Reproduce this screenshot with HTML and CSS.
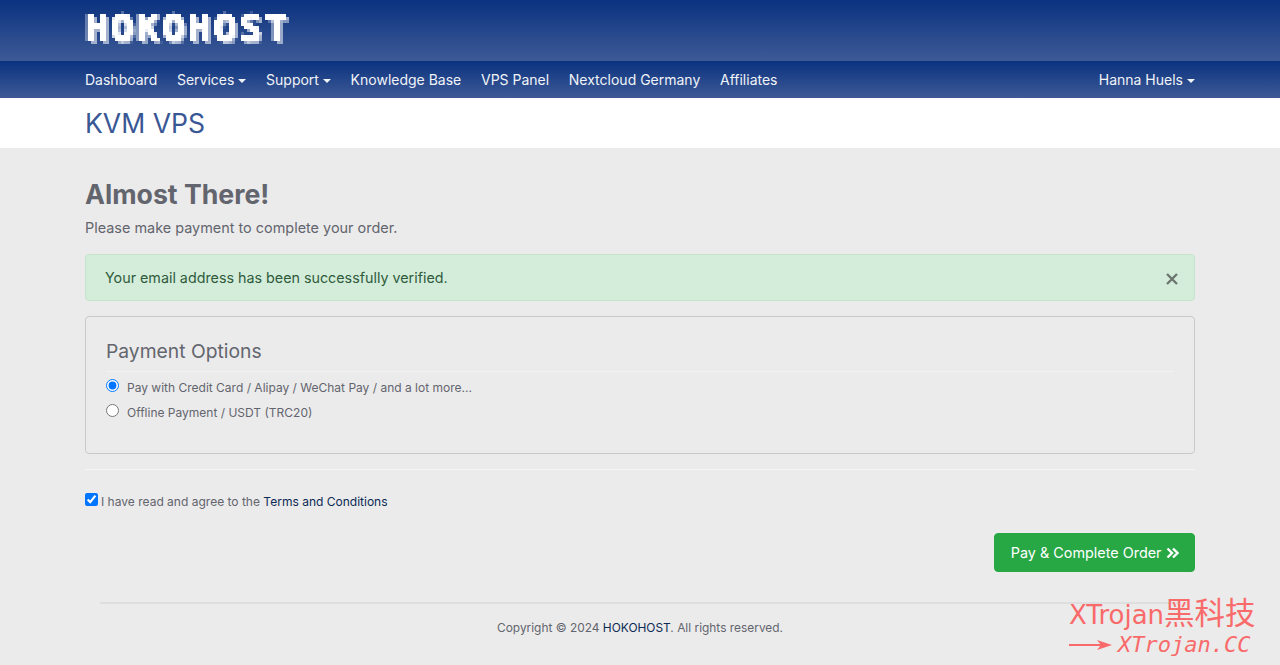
FILE: index.html
```html
<!DOCTYPE html>
<html lang="en">
<head>
<meta charset="utf-8">
<title>KVM VPS</title>
<link rel="stylesheet" href="styles.css">
</head>
<body>
<svg class="defs" width="0" height="0" aria-hidden="true">
  <filter id="pixelate" x="0" y="0" width="100%" height="100%">
    <feFlood x="1" y="1" width="1" height="1"/>
    <feComposite width="3" height="3"/>
    <feTile result="grid"/>
    <feComposite in="SourceGraphic" in2="grid" operator="in"/>
    <feMorphology operator="dilate" radius="1"/>
  </filter>
</svg>
<header class="brandbar">
  <div class="container"><a class="logo">HOKOHOST</a></div>
</header>
<nav class="navbar">
  <div class="container nav-inner">
    <ul class="nav-list">
      <li>Dashboard</li>
      <li class="caret">Services</li>
      <li class="caret">Support</li>
      <li>Knowledge Base</li>
      <li>VPS Panel</li>
      <li>Nextcloud Germany</li>
      <li>Affiliates</li>
    </ul>
    <ul class="nav-list">
      <li class="caret">Hanna Huels</li>
    </ul>
  </div>
</nav>
<section class="page-title">
  <div class="container"><h1>KVM VPS</h1></div>
</section>
<main class="container content">
  <h2 class="heading">Almost There!</h2>
  <p class="lead">Please make payment to complete your order.</p>
  <div class="alert">
    <span>Your email address has been successfully verified.</span>
    <svg class="close" width="12" height="12" viewBox="0 0 12 12"><path d="M1 1l10 10M11 1L1 11" stroke="#6d7570" stroke-width="2.4" fill="none"/></svg>
  </div>
  <div class="card">
    <h3 class="card-title">Payment Options</h3>
    <label class="option"><input type="radio" name="pay" checked><span>Pay with Credit Card / Alipay / WeChat Pay / and a lot more...</span></label>
    <label class="option"><input type="radio" name="pay"><span>Offline Payment / USDT (TRC20)</span></label>
  </div>
  <hr class="rule">
  <label class="terms"><input type="checkbox" checked><span>I have read and agree to the <a>Terms and Conditions</a></span></label>
  <div class="actions">
    <button class="btn">Pay &amp; Complete Order
      <svg width="13" height="12" viewBox="0 0 13 12"><path d="M1.5 1.5L6 6l-4.500 4.500M7 1.500L11.500 6 7 10.500" stroke="#fff" stroke-width="2.400" fill="none"/></svg>
    </button>
  </div>
  <footer class="footer">Copyright © 2024 <a>HOKOHOST</a>. All rights reserved.</footer>
</main>
<div class="watermark">
  <div class="wm-top">XTrojan<span class="wm-cjk">黑科技</span></div>
  <div class="wm-bottom">
    <svg width="43" height="12" viewBox="0 0 43 12"><path d="M0 6h32" stroke="#f96a6a" stroke-width="2"/><path d="M28 1l15 5-15 5 4-5z" fill="#f96a6a"/></svg>
    <span>XTrojan.CC</span>
  </div>
</div>
</body>
</html>
```

FILE: styles.css
```css
* { box-sizing: border-box; }
html, body { margin: 0; padding: 0; }
body {
  height: 665px;
  overflow: hidden;
  position: relative;
  background: #ebebeb;
  color: #63656e;
  font-family: Inter, "Noto Sans CJK SC", sans-serif;
  font-size: 14.43px;
}
.defs { position: absolute; }
.container { width: 1140px; margin: 0 auto; padding: 0 15px; }
.brandbar { height: 61px; background: linear-gradient(#0a327f, #3e5a96); }
.logo {
  display: inline-block;
  margin: 11px 0 0;
  padding: 0 6px 3px 0;
  font-family: "DejaVu Sans Mono", monospace;
  font-weight: 700;
  font-size: 38px;
  line-height: 34px;
  letter-spacing: 2.8px;
  color: #fff;
  -webkit-text-stroke: 1.6px #fff;
  text-shadow: 3px 3px 0 #a3b1cf;
  filter: url(#pixelate);
}
.navbar { height: 37px; background: linear-gradient(#0a327f, #3e5a96); }
.nav-inner { display: flex; justify-content: space-between; align-items: center; height: 37px; }
.nav-list { display: flex; gap: 19.7px; list-style: none; margin: 0; padding: 0; color: #f0f3f8; font-size: 14px; }
.caret::after {
  content: "";
  display: inline-block;
  margin-left: 4px;
  vertical-align: 2px;
  border-top: 4px solid;
  border-left: 4px solid transparent;
  border-right: 4px solid transparent;
}
.page-title { height: 50px; background: #fff; }
.page-title h1 { margin: 0; font-size: 26.6px; font-weight: 400; line-height: 50px; color: #3a5795; }
.content { padding-top: 29px; }
.heading { margin: 0; font-size: 26.7px; font-weight: 700; line-height: 34px; color: #63656e; }
.lead { margin: 7px 0 0; line-height: 20px; }
.alert {
  display: flex;
  justify-content: space-between;
  align-items: center;
  height: 47px;
  margin-top: 16px;
  padding: 0 16px 0 19px;
  background: #d4edda;
  border: 1px solid #c3e6cb;
  border-radius: 4px;
  color: #2f5b3c;
  font-size: 14.3px;
}
.close { margin-top: 2px; }
.card {
  height: 138px;
  margin-top: 15px;
  padding: 21px 20px 20px;
  border: 1px solid #c9c9c9;
  border-radius: 4px;
}
.card-title {
  margin: 0 0 7px;
  padding-bottom: 7px;
  font-size: 19.3px;
  font-weight: 400;
  line-height: 26px;
  border-bottom: 1px solid #f2f2f2;
}
.option { display: flex; align-items: flex-start; gap: 8px; height: 25px; font-size: 12px; line-height: 20px; }
.option input { margin: 0; width: 13px; height: 13px; accent-color: #0075ff; }
.option span { margin-top: -1px; }
.rule { margin: 15px 0 0; border: 0; border-top: 1px solid #f5f5f5; }
.terms { display: flex; align-items: flex-start; gap: 3px; margin-top: 23px; font-size: 12.03px; line-height: 18px; }
.terms input { margin: 0; width: 13px; height: 13px; accent-color: #0075ff; }
a { color: #0d2a55; }
.actions { display: flex; justify-content: flex-end; margin-top: 22px; }
.btn {
  display: flex;
  align-items: center;
  gap: 4px;
  height: 39px;
  padding: 0 15.5px;
  background: #28a745;
  border: 1px solid #28a745;
  border-radius: 4px;
  color: #fff;
  font: 14.4px Inter, sans-serif;
}
.footer {
  margin: 30px 15px 0;
  padding-top: 15px;
  border-top: 2px solid #dedede;
  text-align: center;
  font-size: 11.92px;
  line-height: 18px;
}
.watermark { position: absolute; left: 1069px; top: 598px; color: #f96a6a; }
.wm-top { font-family: "DejaVu Sans", "Noto Sans CJK SC", sans-serif; font-size: 26px; line-height: 32px; white-space: nowrap; }
.wm-cjk { font-size: 30.5px; }
.wm-bottom { display: flex; align-items: center; gap: 6px; font-family: "DejaVu Sans Mono", monospace; font-style: italic; font-size: 22px; line-height: 28px; }
```
